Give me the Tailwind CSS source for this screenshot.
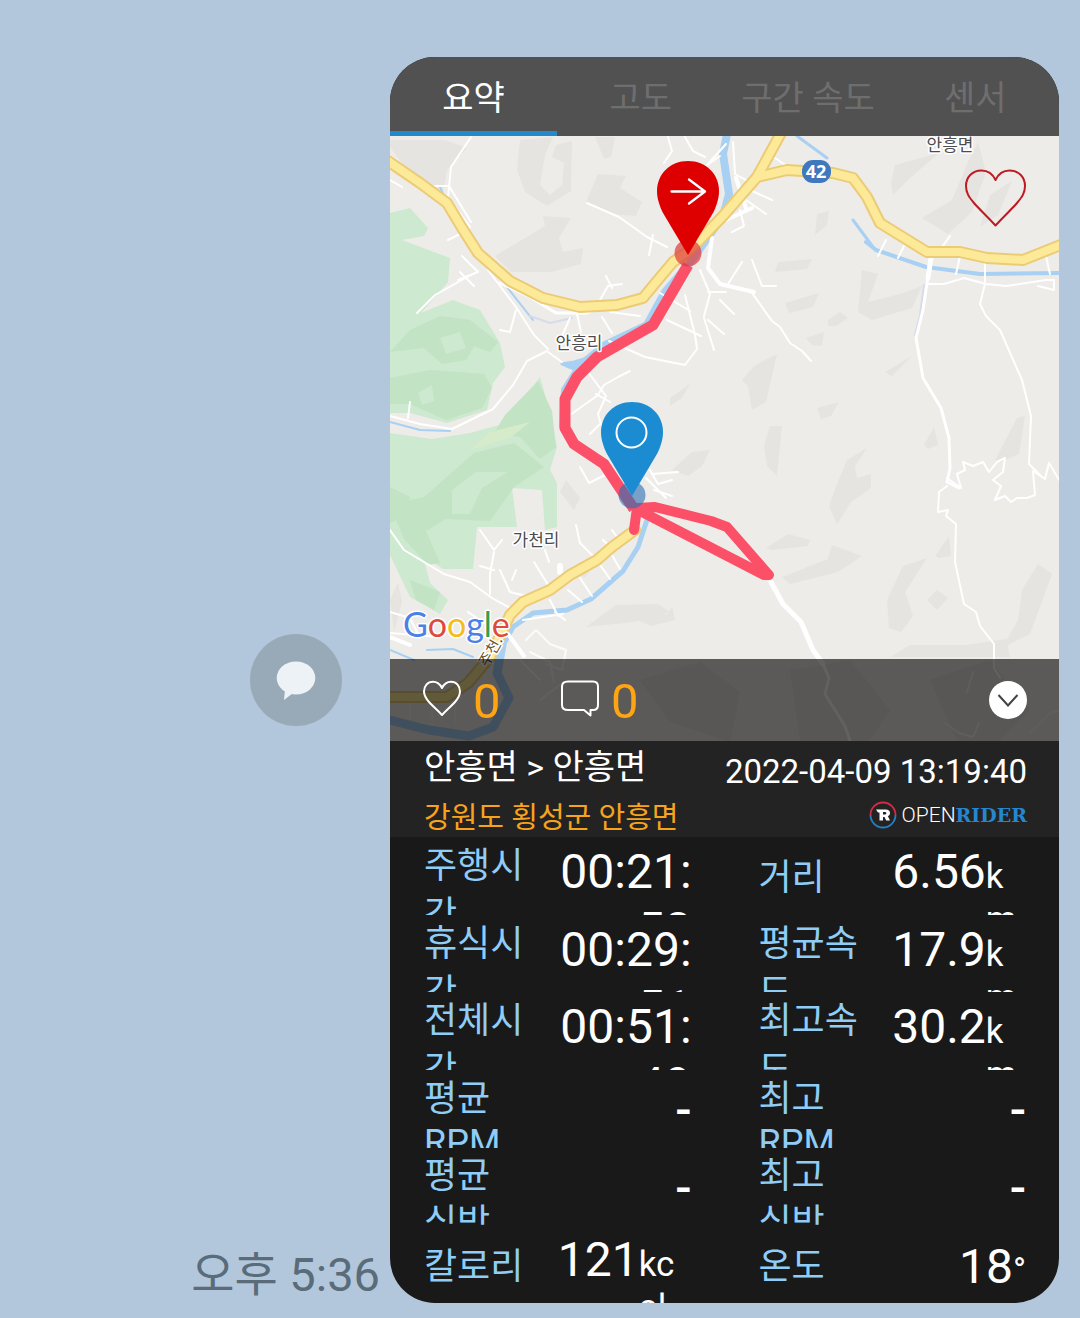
<!DOCTYPE html>
<html lang="ko">
<head>
<meta charset="utf-8">
<meta name="viewport" content="width=device-width, initial-scale=1">
<title>OPENRIDER</title>
<script src="https://cdn.jsdelivr.net/npm/@tailwindcss/browser@4"></script>
</head>
<body class="min-h-screen bg-[#b2c7db] font-['Roboto','Noto_Sans_CJK_KR',sans-serif]">
<main class="flex pt-[57px] pr-[21px] pb-[15px]">
  <div class="grid min-w-0 flex-1">
    <button type="button" aria-label="공유" class="col-start-1 row-start-1 mr-12 flex size-[92px] items-center justify-center self-center justify-self-end rounded-full bg-[#98a9b8]">
      <svg class="size-12" viewBox="0 0 48 48" fill="#edf2f6"><ellipse cx="24" cy="22" rx="19.300" ry="16.500"/><path d="M13 34l-1 10 9-7z"/></svg>
    </button>
    <time class="col-start-1 row-start-1 mr-[10px] self-end justify-self-end whitespace-nowrap text-[47px] leading-[56px] text-[#5a6b79]">오후 5:36</time>
  </div>

  <article class="w-[669px] max-w-full shrink-0 overflow-hidden rounded-[45px] bg-[#191919]">
    <nav class="grid h-[79px] grid-cols-4 bg-[#515151] text-[34px] leading-10 text-[#6e6e6e]">
      <a href="#summary" class="flex items-center justify-center border-b-5 border-[#2389cd] pt-2 text-white">요약</a>
      <a href="#altitude" class="flex items-center justify-center pt-[3px]">고도</a>
      <a href="#speed" class="flex items-center justify-center pt-[3px] whitespace-nowrap">구간 속도</a>
      <a href="#sensor" class="flex items-center justify-center pt-[3px]">센서</a>
    </nav>

    <section class="relative isolate">
      <svg class="absolute inset-0 -z-10 size-full" viewBox="390 136 669 701" preserveAspectRatio="xMidYMid slice" fill="none" stroke-linejoin="round" stroke-linecap="round">
        <rect x="390" y="136" width="669" height="701" fill="#eeece8"/>
        <!-- terrain shading -->
        <g fill="#e6e4e0">
          <path d="M390 140l55 0 22 8-20 22-4 22-24-5-29-40z"/>
          <path d="M520 140l33-3-8 18-5 30 10 10 12-10 2-22-12-6 4-12 16-4-1 50-24 15-22-14-8-22z"/>
          <path d="M595 137h20l-4 20-7 2z"/>
          <path d="M598 174l28 2-6 12 22 14-6 14-26-2-24-12z"/>
          <path d="M495 256l50-30-2-10 28 2-12 20 4 14 20-4-2 16-30 8-40 0z"/>
          <path d="M895 165l44-12-30 26-16 16-2-12z"/>
          <path d="M922 218l30-18 16-38 10-20 8 30-14 40-24 22z"/>
          <path d="M990 195l22-14-14 34-18 12z"/>
          <path d="M778 262l34-3-5 10-32 3z"/>
          <path d="M817 214l12-3-2 14-12 10z"/>
          <path d="M785 303l34-10-6 14-24 6z"/>
          <path d="M828 320l12-8 8 6-12 8-8 0z"/>
          <path d="M806 338l18-6-2 14-10-1z"/>
          <path d="M862 270l16 4-10 28 32-8 22-8-10 22-40 12-14-8z"/>
          <path d="M742 380l12-14 23-12-11 48-14 8-4-24z"/>
          <path d="M817 408l22-6-8 14-10 3z"/>
          <path d="M770 426h12l-5 50-10-10-3-20z"/>
          <path d="M847 460l20-12-12 18 2 12 14-4 0 14-20 14-14 22-8-18 8-22z"/>
          <path d="M885 372l27-16-20 20z"/>
          <path d="M995 460l22-42 8-2-6 38-18 8z"/>
          <path d="M924 445l10-18 4 18-10 4z"/>
          <path d="M766 548l22-14 22 6-2 6-36 4z"/>
          <path d="M782 577l46-18 4-14 30 11-24 16-48 12z"/>
          <path d="M887 600l16-34 24-8-22 34 8 24-12 16-12-4z"/>
          <path d="M927 600l10-10 11 8-11 12z"/>
          <path d="M935 556l14-20 2 20-12 2z"/>
          <path d="M1022 590l16-26 14 10-22 60-28 14 16-28z"/>
          <path d="M672 470l20-18 18-2-8 16-14 10z"/>
          <path d="M586 627l30-22 42-1 12 8-36 10z"/>
          <path d="M628 616l40-2 4-8 3 14-24 6z"/>
          <path d="M670 398l20-14-8 14-12 8z"/>
          <path d="M566 480l14 18-6 12-14-18z"/>
          <path d="M890 657l20-12h56l40-6 4 18z"/>
          <path d="M390 600l8-18 4 20-8 30z"/>
          <path d="M640 680l60-18 40 30-10 50-60-20z"/>
          <path d="M790 670l60-10 40 50-40 60-50-30z"/>
          <path d="M930 680l60-20 40 50-60 60z"/>
          <path d="M572 575l20-8-6 10z"/>
        </g>
        <!-- forests -->
        <g fill="#cde9cf">
          <path d="M390 213l20-5 18 20-4 8-22 4 48 18-2 24-27 31 32-13 27 10 20 33 5 24-12 16-6 27-40 13-37-10-20 0z"/>
          <path d="M390 433l42 6 38-6 47-13 6-20 17-23 10 36 7 34-7 23 7 13v44l-12 3-3-40-30-2 5 39-40 0-4 42h-30l-20-13 7 27 18 17-8 14-30-17-20-42z"/>
        </g>
        <g fill="#c2e3c4">
          <path d="M410 330l30-14 30 4 28 22-8 10-16-6-8 14-24 4-18-16-34 4z"/>
          <path d="M390 378l40-8 54 4 8 14-10 20-36 12-36-16-20 0z"/>
          <path d="M505 415l33-34 14 30 4 36-16 12-20-22-26-4z"/>
          <path d="M424 497l50-44 40-10 30 24-30 20-24 34-44-2-20 12 14 32-12 2-24-26-14-34z"/>
          <path d="M390 487l20 10-6 20-14 6z"/>
          <path d="M410 580l30 12-6 18-18-10z"/>
        </g>
        <g fill="#cde9cf"><path d="M452 490l24-18 32 0-26 16-12 26-18 0z"/><path d="M440 338l20-6 6 16-20 6z"/><path d="M418 393l14-8 2 16-12 4z"/></g>
        <path d="M470 450l20-18 40-10-20 16z" fill="#d6ebca"/>
        <!-- rivers -->
        <g stroke="#a8d0f3">
          <path stroke-width="8" d="M727 134l-4 20 6 40-6 22-34 48-24 28-18 33-42 20-24 20-16 25-2 36 15 22 27 15"/>
          <path stroke-width="3" d="M562 364l12-2 24-7-20 16z" fill="#a8d0f3"/>
          <path stroke-width="5" d="M647 520l-9 27-15 24-32 28-24 11-34 3-20 14-12 22"/>
          <path stroke-width="9" d="M502 645l-5 28 12 25-16 29-24 9-40-6-39-10"/>
          <path stroke-width="3" d="M797 136l30 22M853 220l20 27"/>
          <path stroke-width="4" d="M866 242l10 8 50 17 54 7 79-1"/>
          <path stroke-width="2" d="M390 422l30 8 30 1M440 187l14 32M503 282l30 38M390 650l24 10M427 650l26-1 20 8"/>
          <path stroke-width="2" stroke="#d6dceb" d="M924 285l-4 30-5 20M530 316l20 7 22-5"/>
        </g>
        <!-- minor roads -->
        <g stroke="#fff">
          <path stroke-width="2" d="M471 137l-20 30-3 30 22 30M390 180l12 7M435 186h14l22 36M448 240l16-8M462 256l16 16-20 8M587 203l32 14 28 20 20 10M653 235l-4 20M668 137l4 14-8 12M685 137l8 14 12 6M700 170l20-14M708 164l18-20"/>
          <path stroke-width="2" d="M417 313l18-18 43-24M460 272l14 14M488 270l28 37 18 28 14 14M516 310l-6 22-10-2M548 352l14 10M390 416l30 8 32 5 41-20 20-24 14-24 20-10M410 402l-2 16M577 314l4 18M570 318l-8 18"/>
          <path stroke-width="3" d="M500 283l30 14 26 16 30 0 18-6"/>
          <path stroke-width="2" d="M602 317l10 16M610 312l30 4M600 300l8-14 14-2M612 288l-6-12M685 295l10 40 2 14-12 16-40-8-36-16M667 320l34 16M700 270l10 24-6 22M708 292h18M704 318l10 32M708 320l16 14M660 293l30 18"/>
          <path stroke-width="4" d="M712 238l-4 30 12 16 34 8M736 178l10 30M752 208l-26 12"/>
          <path stroke-width="2" d="M733 142l2 32 18 10 10-14M775 158l18 12M746 200l20 14M750 190l22 10M740 210l4 16-12 6M752 293l20 28 8 6 10 16 12 8 9 10M728 284l14-22M752 260l10 26 14 0M720 300l14 14"/>
          <path stroke-width="2" d="M570 415l28-20 6-10 14-8 12-6M588 372l18 24-8 18 6 20 14-10M596 394l14 8M590 434l10-10M580 467l9 16 20-10M650 470l8 14 14-4M646 478l20 20M654 490l18 6M652 474l26-2"/>
          <path stroke-width="2" d="M390 530l14 20 40 24 26 8 22 16 18 10M480 530l14 20 8-10M494 552l-4 22 0 20M480 566l14 4M500 570l10 22 16 4M512 580l4-10M534 562l16 26M545 550l4 12M576 525l4 18 16 16M603 540l8 8M612 530l10 14M568 590l14 12M550 600l8 16M580 578l12 18M600 565l10 14M612 555l8 14M555 612l10 8M523 620l40-6M390 612l20 6 10 20M390 633l50 4M468 612l24 16"/>
          <path stroke-width="6" d="M560 566v6"/>
          <path stroke-width="4" d="M508 634l16 22M390 637l20 8"/>
          <path stroke-width="2" d="M526 640l10-10 14 14 16 6-4 20-16-6M530 652l20 10 4 20M520 660l20 20M540 700l24-18" stroke-opacity=".8"/>
          <path stroke-width="1" d="M410 700v20M432 700v25M455 700v22" stroke-opacity=".7"/>
          <path stroke-width="5" d="M931 258l-3 20M771 582l12 22 18 18 12 28 10 14"/>
          <path stroke-width="3" d="M929 270l-6 40-7 28 7 40 18 30 8 30 1 30-3 14 12 6M823 664l6 14-4 16 20 32 6 18"/>
          <path stroke-width="2" d="M928 284h16l20-6 22 6 20 2 40-6 8 0 0 10-16-4M985 258v26l-5 20 6 12 14 14 22 50 9 36-2 48 12 12M960 256l-4 18M1046 256l4 18M886 240l-8 16M908 238l-10 20M950 236l-10 14"/>
          <path stroke-width="2" d="M947 478l14 10-4-14 8-4-2-8 10 4 10-4 6 10 8-10 8-4-2 14-10 8 8 6-6 14 10-4 6 6 6-4 10 0 8-3-2-24 12 8 4-16 12 20 6-11M947 486l-8 6-1 20 10-2-2 6 10 8-1 38 6 28 3 14 12 8 4 14 14 18v24l6 10"/>
          <path stroke-width="2" stroke="#f7f6f4" d="M945 723l14 10 14 4 6-14M1030 733l20-20 8-2M973 672l-6 20"/>
        </g>
        <!-- national roads -->
        <g stroke="#eccb76" stroke-width="12">
          <path d="M385 159l35 24 27 20 15 25 16 25 32 28 33 17 37 9 37-2 26-7 14-17 16-19 17-12 33-34 34-39 24-44"/>
          <path d="M757 177l30-7 46 3 20 5 14 19 13 26 47 29 33 0 27 6 36 2 40-16"/>
          <path d="M635 530l-23 17-15 13-27 15-20 15-27 12-13 13-20 42-22 26-21 14H385"/>
        </g>
        <g stroke="#fdea98" stroke-width="8">
          <path d="M385 159l35 24 27 20 15 25 16 25 32 28 33 17 37 9 37-2 26-7 14-17 16-19 17-12 33-34 34-39 24-44"/>
          <path d="M757 177l30-7 46 3 20 5 14 19 13 26 47 29 33 0 27 6 36 2 40-16"/>
          <path d="M635 530l-23 17-15 13-27 15-20 15-27 12-13 13-20 42-22 26-21 14H385"/>
        </g>
        <path d="M600 790c2-14 18-14 20 0s-6 30-14 40" stroke="#fdea98" stroke-width="7"/>
        <!-- ridden route -->
        <path stroke="#fb5068" stroke-width="11" stroke-linecap="butt" d="M688 265l-35 60-56 32-20 20-12 22v29l9 16 30 20 30 45"/>
        <path stroke="#fb5068" stroke-width="10" d="M634 530l3-22 18-1 56 14 16 6 42 48-5 0-120-62"/>
        <!-- route marks -->
        <circle cx="688" cy="253" r="13.500" fill="#dc3a3a" fill-opacity=".7"/>
        <circle cx="632" cy="495" r="13.500" fill="#2a6eb4" fill-opacity=".6"/>
        <path fill="#de0000" d="M688 161c-18 0-31 13-31 30 0 8 3 16 6 22l25 42 25-42c3-6 6-14 6-22 0-17-13-30-31-30z"/>
        <path stroke="#fff" stroke-width="2.300" d="M671.500 191.500h33M689 179.500l16 12-16 12"/>
        <path fill="#1b8cd2" d="M632 402c-18 0-31 13-31 30 0 8 3 16 6 22l25 42 25-42c3-6 6-14 6-22 0-17-13-30-31-30z"/>
        <circle cx="631.500" cy="432.500" r="15" stroke="#fff" stroke-width="2"/>
        <rect x="802" y="160" width="29" height="23" rx="11" fill="#3f78be"/>
        <text x="816" y="178" text-anchor="middle" font-size="18" font-weight="700" fill="#fff" font-family="Open Sans, sans-serif">42</text>
        <g font-family="Noto Sans CJK KR, sans-serif" font-size="17" fill="#4b4b50" stroke="#fff" stroke-width="3" paint-order="stroke" text-anchor="middle">
          <text x="950" y="151">안흥면</text>
          <text x="579" y="349">안흥리</text>
          <text x="536" y="546">가천리</text>
          <text x="492" y="656" font-size="15" fill="#6b5128" transform="rotate(-60 492 652)">주천.</text>
        </g>
        <text x="403" y="637" font-family="Lato, sans-serif" font-size="34" stroke="#fff" stroke-width="3" paint-order="stroke"><tspan fill="#4a80e8">G</tspan><tspan fill="#dd4b3e">o</tspan><tspan fill="#f2bd1d">o</tspan><tspan fill="#4a80e8">g</tspan><tspan fill="#2f9f57">l</tspan><tspan fill="#dd4b3e">e</tspan></text>
      </svg>

      <div class="flex h-[523px] items-start justify-end px-8 pt-[31px]">
        <button type="button" aria-label="즐겨찾기">
          <svg class="h-[62px] w-[63px]" viewBox="0 0 63 62" fill="none" stroke="#bd1a23" stroke-width="2" stroke-linejoin="round"><path d="M31.500 13C28 5.500 23 3.500 17.500 3.500 8 3.500 2 10.500 2 19c0 7 3 11 8 17 6 7 12 12 21.500 22.500C41 48 47 43 53 36c5-6 8-10 8-17 0-8.500-6-15.500-15.500-15.500C40 3.500 35 5.500 31.500 13z"/></svg>
        </button>
      </div>

      <div class="flex h-[82px] items-center bg-black/62 px-8 text-[49px] leading-[60px] text-[#ffa514]">
        <button type="button" aria-label="좋아요" class="flex w-[138px] items-center gap-[11px] pt-1">
          <svg class="-mt-2 h-10 w-10" viewBox="0 0 40 40" fill="none" stroke="#fff" stroke-width="2" stroke-linejoin="round"><path d="M20 10C17.500 5 14.500 3.800 11 3.800 5.500 3.800 2 8 2 13.500c0 4 2 7 5 10.500 4 4.500 8 7.500 13 13 5-5.500 9-8.500 13-13 3-3.500 5-6.500 5-10.500C38 8 34.500 3.800 29 3.800 25.500 3.800 22.500 5 20 10z"/></svg>
          <span>0</span>
        </button>
        <button type="button" aria-label="댓글" class="flex items-center gap-[11px] pt-1">
          <svg class="-mt-2 h-10 w-10" viewBox="0 0 40 40" fill="none" stroke="#fff" stroke-width="2" stroke-linejoin="round"><path d="M8 3.500h25c3.500 0 5 2 5 5V27c0 3.500-1.500 5-5 5h-2.500v5.500L24 32H8c-3.500 0-6-1.500-6-5V8.500c0-3 2-5 6-5z"/></svg>
          <span>0</span>
        </button>
        <button type="button" aria-label="접기" class="ml-auto flex size-[38px] items-center justify-center rounded-full bg-white">
          <svg class="size-6" viewBox="0 0 24 24" fill="none" stroke="#444" stroke-width="2"><path d="M2.500 7L12 17.500 21.500 7"/></svg>
        </button>
      </div>

      <div class="flex h-24 justify-between bg-[#181818]/95 pr-8 pl-[34px] whitespace-nowrap">
        <div class="pt-px">
          <h1 class="text-[34px] leading-[50px] text-white">안흥면 &gt; 안흥면</h1>
          <p class="text-[29px] leading-[52px] text-[#f7a31b]">강원도 횡성군 안흥면</p>
        </div>
        <div class="flex flex-col items-end pt-2">
          <time class="text-[33px] leading-[46px] text-white">2022-04-09 13:19:40</time>
          <div class="flex h-10 items-center gap-[5px] text-[21px] leading-10 text-white">
            <svg class="size-7" viewBox="0 0 28 28" fill="none"><path d="M1.500 14a12.500 12.500 0 0 1 25 0" stroke="#cf2d43" stroke-width="1.800"/><path d="M1.500 14a12.500 12.500 0 0 0 25 0" stroke="#257fc0" stroke-width="1.800"/><path fill="#fff" fill-rule="evenodd" d="M7 8.500h9.500c3 0 4.500 1.300 4.500 3.500 0 1.700-.9 2.700-2.200 3.100L21 19.500h-3.800L15.500 16H14v3.500h-3.500v-8H9zM14 11v2.500h2.200c1.600 0 1.600-2.500 0-2.500z"/></svg>
            <span class="flex items-baseline font-light">OPEN<b class="font-['DejaVu_Serif'] text-[19px] font-bold text-[#2488cf]">RIDER</b></span>
          </div>
        </div>
      </div>
    </section>

    <dl class="grid h-[466px] grid-cols-2 grid-rows-6 text-[35px] leading-[43px] text-white">
      <div class="grid min-h-0 grid-cols-2 grid-rows-1 overflow-hidden pr-[33px] pl-[34px]">
        <dt class="pt-[5px] pr-2 text-[36px] leading-[49px] text-[#8fcdf7]">주행시간</dt>
        <dd class="pt-[6px] text-right text-[48px] leading-[58px]">00:21:<wbr>58</dd>
      </div>
      <div class="grid min-h-0 grid-cols-2 grid-rows-1 overflow-hidden pr-[33px] pl-[34px]">
        <dt class="self-center pt-[6px] pr-2 text-[36px] leading-[49px] text-[#8fcdf7]">거리</dt>
        <dd class="flex items-baseline pt-[7px] break-all"><span class="shrink-0 text-[48px] leading-[56px]">6.56</span><span class="min-w-0 flex-1">km</span></dd>
      </div>
      <div class="grid min-h-0 grid-cols-2 grid-rows-1 overflow-hidden pr-[33px] pl-[34px]">
        <dt class="pt-[5px] pr-2 text-[36px] leading-[49px] text-[#8fcdf7]">휴식시간</dt>
        <dd class="pt-[6px] text-right text-[48px] leading-[58px]">00:29:<wbr>51</dd>
      </div>
      <div class="grid min-h-0 grid-cols-2 grid-rows-1 overflow-hidden pr-[33px] pl-[34px]">
        <dt class="pt-[5px] pr-2 text-[36px] leading-[49px] text-[#8fcdf7]">평균속도</dt>
        <dd class="flex items-baseline pt-[7px] break-all"><span class="shrink-0 text-[48px] leading-[56px]">17.9</span><span class="min-w-0 flex-1">km<wbr>/h</span></dd>
      </div>
      <div class="grid min-h-0 grid-cols-2 grid-rows-1 overflow-hidden pr-[33px] pl-[34px]">
        <dt class="pt-[5px] pr-2 text-[36px] leading-[49px] text-[#8fcdf7]">전체시간</dt>
        <dd class="pt-[6px] text-right text-[48px] leading-[58px]">00:51:<wbr>49</dd>
      </div>
      <div class="grid min-h-0 grid-cols-2 grid-rows-1 overflow-hidden pr-[33px] pl-[34px]">
        <dt class="pt-[5px] pr-2 text-[36px] leading-[49px] text-[#8fcdf7]">최고속도</dt>
        <dd class="flex items-baseline pt-[7px] break-all"><span class="shrink-0 text-[48px] leading-[56px]">30.2</span><span class="min-w-0 flex-1">km<wbr>/h</span></dd>
      </div>
      <div class="grid min-h-0 grid-cols-2 grid-rows-1 overflow-hidden pr-[33px] pl-[34px]">
        <dt class="pt-[7px] pr-2 text-[36px] leading-[44px] text-[#8fcdf7]">평균 RPM</dt>
        <dd class="pt-3 text-right text-[48px] leading-[56px] font-medium">-</dd>
      </div>
      <div class="grid min-h-0 grid-cols-2 grid-rows-1 overflow-hidden pr-[33px] pl-[34px]">
        <dt class="pt-[7px] pr-2 text-[36px] leading-[44px] text-[#8fcdf7]">최고 RPM</dt>
        <dd class="pt-3 text-right text-[48px] leading-[56px] font-medium">-</dd>
      </div>
      <div class="grid min-h-0 grid-cols-2 grid-rows-1 overflow-hidden pr-[33px] pl-[34px]">
        <dt class="pt-[5px] pr-2 text-[36px] leading-[47px] text-[#8fcdf7]">평균<br>심박</dt>
        <dd class="pt-3 text-right text-[48px] leading-[56px] font-medium">-</dd>
      </div>
      <div class="grid min-h-0 grid-cols-2 grid-rows-1 overflow-hidden pr-[33px] pl-[34px]">
        <dt class="pt-[5px] pr-2 text-[36px] leading-[47px] text-[#8fcdf7]">최고<br>심박</dt>
        <dd class="pt-3 text-right text-[48px] leading-[56px] font-medium">-</dd>
      </div>
      <div class="grid min-h-0 grid-cols-2 grid-rows-1 overflow-hidden pr-[33px] pl-[34px]">
        <dt class="self-center pt-[6px] pr-2 text-[36px] leading-[49px] text-[#8fcdf7]">칼로리</dt>
        <dd class="flex items-baseline pt-[7px] break-all"><span class="shrink-0 text-[48px] leading-[56px]">121</span><span class="min-w-0 flex-1">kcal</span></dd>
      </div>
      <div class="grid min-h-0 grid-cols-2 grid-rows-1 overflow-hidden pr-[33px] pl-[34px]">
        <dt class="self-center pt-[6px] pr-2 text-[36px] leading-[49px] text-[#8fcdf7]">온도</dt>
        <dd class="flex items-baseline justify-end pt-[14px]"><span class="text-[48px] leading-[56px]">18</span><span>°</span></dd>
      </div>
    </dl>
  </article>
</main>
</body>
</html>
